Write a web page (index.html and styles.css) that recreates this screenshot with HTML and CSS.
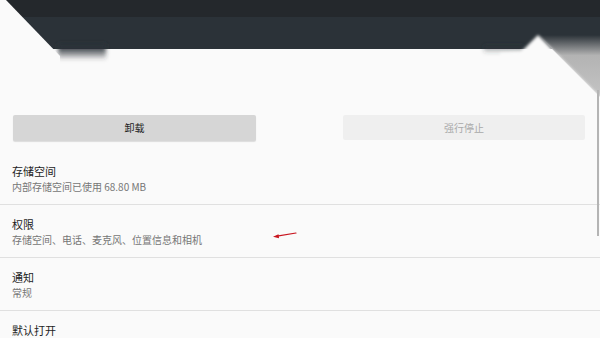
FILE: index.html
```
<!DOCTYPE html>
<html lang="zh-CN">
<head>
<meta charset="utf-8">
<title>应用信息</title>
<link rel="stylesheet" href="styles.css">
</head>
<body>
<div class="page">
  <header class="band">
    <div class="band-top"></div>
    <div class="band-bottom"></div>
  </header>
  <svg class="top-art" width="600" height="100" viewBox="0 0 600 100" aria-hidden="true">
    <defs>
      <linearGradient id="gr" x1="0" y1="35" x2="0" y2="97" gradientUnits="userSpaceOnUse">
        <stop offset="0" stop-color="#2b3238"/>
        <stop offset="0.33" stop-color="#b3b3b3"/>
        <stop offset="1" stop-color="#c4c4c4"/>
      </linearGradient>
      <linearGradient id="fade" x1="0" y1="44" x2="0" y2="60" gradientUnits="userSpaceOnUse">
        <stop offset="0" stop-color="#2b3238"/>
        <stop offset="0.4" stop-color="#2b3238" stop-opacity="0.75"/>
        <stop offset="1" stop-color="#2b3238" stop-opacity="0"/>
      </linearGradient>
      <linearGradient id="fade2" x1="0" y1="44" x2="0" y2="54" gradientUnits="userSpaceOnUse">
        <stop offset="0" stop-color="#2b3238" stop-opacity="0.6"/>
        <stop offset="1" stop-color="#2b3238" stop-opacity="0"/>
      </linearGradient>
      <filter id="b1" x="-10%" y="-10%" width="120%" height="120%"><feGaussianBlur stdDeviation="0.7"/></filter>
      <filter id="b2" x="-10%" y="-10%" width="120%" height="120%"><feGaussianBlur stdDeviation="1.4"/></filter>
      <filter id="b3" x="-40%" y="-80%" width="180%" height="260%"><feGaussianBlur stdDeviation="2"/></filter>
    </defs>
    <rect x="58" y="44" width="48" height="16" fill="url(#fade)" filter="url(#b3)"/>
    <rect x="484" y="45" width="40" height="8" fill="url(#fade2)" filter="url(#b3)"/>
    <polygon points="538,35 600,35 600,97" fill="url(#gr)"/>
    <polygon points="0,0 6,0 60,56 60,100 0,100" fill="#fafafa" filter="url(#b1)"/>
    <polygon points="538,35 600,97 600,100 500,100 500,53 521,52" fill="#fafafa" filter="url(#b2)"/>
  </svg>
  <div class="scroll-line"></div>

  <div class="actions">
    <button class="btn btn-primary">卸载</button>
    <button class="btn btn-disabled">强行停止</button>
  </div>

  <ul class="list">
    <li class="row">
      <div class="title">存储空间</div>
      <div class="sub">内部存储空间已使用 68.80 MB</div>
    </li>
    <li class="row">
      <div class="title">权限</div>
      <div class="sub">存储空间、电话、麦克风、位置信息和相机</div>
      <svg class="arrow" width="28" height="12" viewBox="0 0 28 12" aria-hidden="true">
        <line x1="25" y1="3" x2="6" y2="6.2" stroke="#c8141e" stroke-width="1.2" stroke-linecap="round"/>
        <polygon points="2,6.8 7.5,4.3 8,8.2" fill="#c8141e"/>
      </svg>
    </li>
    <li class="row">
      <div class="title">通知</div>
      <div class="sub">常规</div>
    </li>
    <li class="row">
      <div class="title">默认打开</div>
    </li>
  </ul>
</div>
</body>
</html>
```

FILE: styles.css
```
html, body {
  margin: 0;
  padding: 0;
  background: #fafafa;
}
body {
  width: 600px;
  height: 338px;
  overflow: hidden;
  font-family: "Noto Sans CJK SC", "Noto Sans", sans-serif;
}
.page {
  position: relative;
  width: 600px;
  height: 338px;
  overflow: hidden;
}
.band-top {
  height: 17px;
  background: #24282c;
}
.band-bottom {
  height: 32px;
  background: #2b3238;
}
.top-art {
  position: absolute;
  left: 0;
  top: 0;
}
.scroll-line {
  position: absolute;
  right: 1px;
  top: 90px;
  width: 2px;
  height: 146px;
  background: #b4b4b4;
  z-index: 2;
}
.actions {
  display: flex;
  justify-content: space-between;
  padding: 0 15px 0 13px;
  margin-top: 66px;
}
.btn {
  width: 243px;
  height: 26px;
  border: 0;
  border-radius: 2px;
  font-family: inherit;
  font-size: 10px;
  line-height: 26px;
  padding: 0;
}
.btn-primary {
  background: #d6d6d6;
  color: #222;
  box-shadow: 0 1px 1px rgba(0,0,0,0.12);
}
.btn-disabled {
  width: 242px;
  height: 25px;
  background: #efefef;
  color: #a9a9a9;
}
.list {
  list-style: none;
  margin: 11px 0 0;
  padding: 0;
}
.row {
  position: relative;
  padding: 12px 0 10px 12px;
  border-bottom: 1px solid #e0e0e0;
}
.title {
  font-size: 11px;
  line-height: 15px;
  color: #1e1e1e;
}
.sub {
  font-size: 10px;
  line-height: 15px;
  color: #767676;
}
.arrow {
  position: absolute;
  left: 271px;
  top: 25px;
}
```
